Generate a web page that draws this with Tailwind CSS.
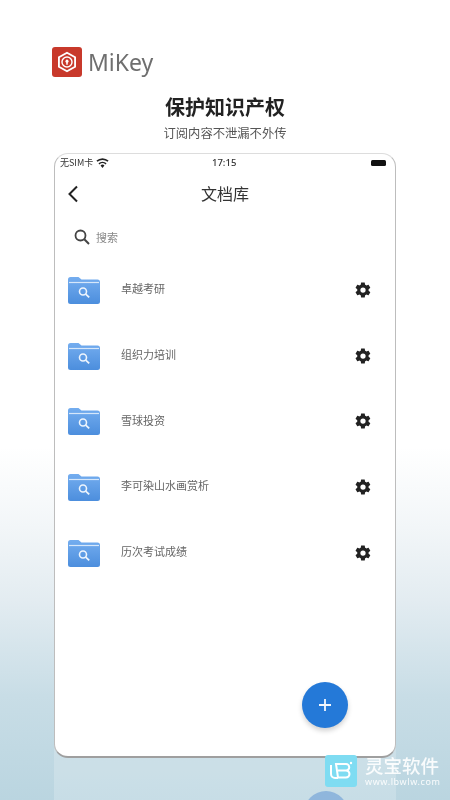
<!DOCTYPE html>
<html lang="en">
<head>
  <meta charset="UTF-8">
  <title>MiKey</title>
  <script src="https://cdn.jsdelivr.net/npm/@tailwindcss/browser@4"></script>
</head>
<body class="m-0">
  <div class="relative w-[450px] h-[800px] overflow-hidden blur-[0.4px] bg-[linear-gradient(180deg,#ffffff_0%,#ffffff_56%,#f2f6f8_66%,#e3ecf1_75%,#c8dde6_87%,#bad5e0_100%)] font-['Noto_Sans_CJK_SC','Noto_Sans',sans-serif]">

    <!-- shared folder gradient -->
    <svg class="absolute w-0 h-0">
      <defs>
        <linearGradient id="folderFill" x1="0" y1="0" x2="0" y2="1">
          <stop offset="0" stop-color="#74adef"/>
          <stop offset="1" stop-color="#4c8edd"/>
        </linearGradient>
      </defs>
    </svg>

    <!-- Logo -->
    <div class="flex items-center pl-[52px] pt-[47px] h-[77px]">
      <div class="w-[30px] h-[30px] rounded-[3px] bg-[#c8392b] flex items-center justify-center">
        <svg width="24" height="24" viewBox="0 0 22 22" fill="none">
          <path d="M11 2.500l7.400 4.200v8.600L11 19.500l-7.400-4.200V6.700z" stroke="#fff" stroke-width="1.700" fill="none"/>
          <circle cx="11" cy="11" r="4.600" stroke="#fff" stroke-width="1.300"/>
          <circle cx="11" cy="10.200" r="1.400" fill="#fff"/>
          <rect x="10.300" y="10.500" width="1.400" height="3" fill="#fff"/>
        </svg>
      </div>
      <span class="ml-[6px] text-[23px] leading-none text-[#6f6f6f] font-['Noto_Sans',sans-serif]">MiKey</span>
    </div>

    <!-- Heading -->
    <div class="flex flex-col items-center">
      <h1 class="text-[20px] leading-[28px] mt-[16px] font-bold text-[#222]">保护知识产权</h1>
      <p class="text-[12.300px] leading-[18px] mt-[3px] text-[#555]">订阅内容不泄漏不外传</p>
    </div>

    <!-- Phone card -->
    <div class="relative z-10 mx-[54px] mt-[11px] w-[342px] h-[605px] bg-white rounded-[14px] border border-[#bdbdbd] border-t-[#dddddd] border-b-[#9f9f9f] border-b-2 flex flex-col">
      <!-- Status bar -->
      <div class="relative flex items-center h-[17px] px-[5px] text-[#333]">
        <span class="text-[9px] leading-none">无SIM卡</span>
        <svg class="ml-[3px]" width="13" height="10" viewBox="0 0 24 18" fill="#222">
          <path d="M12 18l-3.600-4.600a5.800 5.800 0 0 1 7.200 0z"/>
          <path d="M12 6.500a11 11 0 0 0-7.500 3l1.900 2.300a8 8 0 0 1 11.200 0l1.900-2.300a11 11 0 0 0-7.500-3z"/>
          <path d="M12 0A17 17 0 0 0 .8 4.600l1.900 2.300a14 14 0 0 1 18.600 0l1.900-2.300A17 17 0 0 0 12 0z"/>
        </svg>
        <span class="absolute left-[157px] text-[9.500px] font-medium leading-none font-['Noto_Sans',sans-serif]">17:15</span>
        <div class="ml-auto mr-[4px] w-[15px] h-[6px] rounded-[1.500px] bg-[#111]"></div>
      </div>

      <!-- Title bar -->
      <div class="relative flex items-center justify-center h-[46px] pb-[2px]">
        <svg class="absolute left-[11px] top-[14px]" width="14" height="18" viewBox="0 0 14 18" fill="none">
          <path d="M11 1.500L3.500 9l7.500 7.500" stroke="#222" stroke-width="2"/>
        </svg>
        <span class="text-[16px] leading-none text-[#333]">文档库</span>
      </div>

      <!-- Search -->
      <div class="flex items-center h-[32px] mt-[4px] pl-[18px]">
        <svg width="18" height="18" viewBox="0 0 18 18" fill="none">
          <circle cx="7.500" cy="7.500" r="5" stroke="#444" stroke-width="1.800"/>
          <path d="M11.300 11.300L16 16" stroke="#444" stroke-width="2"/>
        </svg>
        <span class="ml-[5px] text-[11px] leading-none text-[#888]">搜索</span>
      </div>

      <!-- Folder list -->
      <div class="flex flex-col mt-[4px]">
        <div class="flex items-center h-[65.750px] pl-[12px] pr-[23px]">
          <svg width="34" height="30" viewBox="0 0 34 30"><path d="M1 4.500A2.500 2.500 0 0 1 3.500 2h8l3 2.500h16A2.500 2.500 0 0 1 33 7v19.500a2.500 2.500 0 0 1-2.500 2.500h-27A2.500 2.500 0 0 1 1 26.500z" fill="url(#folderFill)"/><path d="M2 7.500h30" stroke="#d6e7fa" stroke-width="1.200"/><circle cx="16" cy="16.500" r="3.500" fill="none" stroke="#eef5fd" stroke-width="1.600"/><path d="M18.700 19.200l3.500 3.200" stroke="#eef5fd" stroke-width="1.800"/></svg>
          <span class="ml-[20px] mb-[3px] text-[11px] text-[#666]">卓越考研</span>
          <svg class="ml-auto" width="18" height="18" viewBox="0 0 24 24" fill="#222"><path d="M19.400 13c0-.3.1-.6.1-1s0-.7-.1-1l2.100-1.600c.2-.2.2-.4.1-.6l-2-3.500c-.1-.2-.4-.3-.6-.2l-2.500 1c-.5-.4-1.100-.7-1.700-1L14.400 2.500c0-.3-.2-.5-.5-.5h-4c-.2 0-.4.2-.5.4L9 5.100c-.6.2-1.200.6-1.700 1l-2.500-1c-.2-.1-.5 0-.6.2l-2 3.500c-.1.200 0 .5.100.6L4.400 11c0 .3-.1.700-.1 1s0 .7.1 1l-2.100 1.600c-.2.200-.2.400-.1.600l2 3.500c.1.200.4.300.6.200l2.500-1c.5.400 1.100.700 1.700 1l.4 2.600c0 .2.200.400.500.400h4c.2 0 .5-.2.500-.4l.4-2.600c.6-.3 1.200-.6 1.700-1l2.500 1c.2.100.5 0 .6-.2l2-3.500c.1-.2.100-.5-.1-.6zM12 15.500a3.500 3.500 0 1 1 0-7 3.500 3.500 0 0 1 0 7z"/></svg>
        </div>
        <div class="flex items-center h-[65.750px] pl-[12px] pr-[23px]">
          <svg width="34" height="30" viewBox="0 0 34 30"><path d="M1 4.500A2.500 2.500 0 0 1 3.500 2h8l3 2.500h16A2.500 2.500 0 0 1 33 7v19.500a2.500 2.500 0 0 1-2.500 2.500h-27A2.500 2.500 0 0 1 1 26.500z" fill="url(#folderFill)"/><path d="M2 7.500h30" stroke="#d6e7fa" stroke-width="1.200"/><circle cx="16" cy="16.500" r="3.500" fill="none" stroke="#eef5fd" stroke-width="1.600"/><path d="M18.700 19.200l3.500 3.200" stroke="#eef5fd" stroke-width="1.800"/></svg>
          <span class="ml-[20px] mb-[3px] text-[11px] text-[#666]">组织力培训</span>
          <svg class="ml-auto" width="18" height="18" viewBox="0 0 24 24" fill="#222"><path d="M19.400 13c0-.3.1-.6.1-1s0-.7-.1-1l2.100-1.600c.2-.2.2-.4.1-.6l-2-3.500c-.1-.2-.4-.3-.6-.2l-2.500 1c-.5-.4-1.100-.7-1.700-1L14.400 2.500c0-.3-.2-.5-.5-.5h-4c-.2 0-.4.2-.5.4L9 5.100c-.6.2-1.200.6-1.700 1l-2.500-1c-.2-.1-.5 0-.6.2l-2 3.500c-.1.200 0 .5.100.6L4.400 11c0 .3-.1.700-.1 1s0 .7.1 1l-2.100 1.600c-.2.200-.2.400-.1.600l2 3.500c.1.200.4.300.6.200l2.500-1c.5.400 1.100.700 1.700 1l.4 2.600c0 .2.200.400.500.400h4c.2 0 .5-.2.500-.4l.4-2.600c.6-.3 1.200-.6 1.700-1l2.500 1c.2.100.5 0 .6-.2l2-3.500c.1-.2.100-.5-.1-.6zM12 15.500a3.500 3.500 0 1 1 0-7 3.500 3.500 0 0 1 0 7z"/></svg>
        </div>
        <div class="flex items-center h-[65.750px] pl-[12px] pr-[23px]">
          <svg width="34" height="30" viewBox="0 0 34 30"><path d="M1 4.500A2.500 2.500 0 0 1 3.500 2h8l3 2.500h16A2.500 2.500 0 0 1 33 7v19.500a2.500 2.500 0 0 1-2.500 2.500h-27A2.500 2.500 0 0 1 1 26.500z" fill="url(#folderFill)"/><path d="M2 7.500h30" stroke="#d6e7fa" stroke-width="1.200"/><circle cx="16" cy="16.500" r="3.500" fill="none" stroke="#eef5fd" stroke-width="1.600"/><path d="M18.700 19.200l3.500 3.200" stroke="#eef5fd" stroke-width="1.800"/></svg>
          <span class="ml-[20px] mb-[3px] text-[11px] text-[#666]">雪球投资</span>
          <svg class="ml-auto" width="18" height="18" viewBox="0 0 24 24" fill="#222"><path d="M19.400 13c0-.3.1-.6.1-1s0-.7-.1-1l2.100-1.600c.2-.2.2-.4.1-.6l-2-3.500c-.1-.2-.4-.3-.6-.2l-2.500 1c-.5-.4-1.100-.7-1.700-1L14.400 2.500c0-.3-.2-.5-.5-.5h-4c-.2 0-.4.2-.5.4L9 5.100c-.6.2-1.200.6-1.700 1l-2.500-1c-.2-.1-.5 0-.6.2l-2 3.500c-.1.200 0 .5.100.6L4.400 11c0 .3-.1.700-.1 1s0 .7.1 1l-2.100 1.600c-.2.200-.2.400-.1.600l2 3.500c.1.200.4.300.6.200l2.500-1c.5.400 1.100.700 1.700 1l.4 2.600c0 .2.200.400.500.400h4c.2 0 .5-.2.500-.4l.4-2.600c.6-.3 1.200-.6 1.700-1l2.500 1c.2.100.5 0 .6-.2l2-3.500c.1-.2.100-.5-.1-.6zM12 15.500a3.500 3.500 0 1 1 0-7 3.500 3.500 0 0 1 0 7z"/></svg>
        </div>
        <div class="flex items-center h-[65.750px] pl-[12px] pr-[23px]">
          <svg width="34" height="30" viewBox="0 0 34 30"><path d="M1 4.500A2.500 2.500 0 0 1 3.500 2h8l3 2.500h16A2.500 2.500 0 0 1 33 7v19.500a2.500 2.500 0 0 1-2.500 2.500h-27A2.500 2.500 0 0 1 1 26.500z" fill="url(#folderFill)"/><path d="M2 7.500h30" stroke="#d6e7fa" stroke-width="1.200"/><circle cx="16" cy="16.500" r="3.500" fill="none" stroke="#eef5fd" stroke-width="1.600"/><path d="M18.700 19.200l3.500 3.200" stroke="#eef5fd" stroke-width="1.800"/></svg>
          <span class="ml-[20px] mb-[3px] text-[11px] text-[#666]">李可染山水画赏析</span>
          <svg class="ml-auto" width="18" height="18" viewBox="0 0 24 24" fill="#222"><path d="M19.400 13c0-.3.1-.6.1-1s0-.7-.1-1l2.100-1.600c.2-.2.2-.4.1-.6l-2-3.500c-.1-.2-.4-.3-.6-.2l-2.500 1c-.5-.4-1.100-.7-1.700-1L14.400 2.500c0-.3-.2-.5-.5-.5h-4c-.2 0-.4.2-.5.4L9 5.100c-.6.2-1.200.6-1.700 1l-2.500-1c-.2-.1-.5 0-.6.2l-2 3.500c-.1.200 0 .5.100.6L4.400 11c0 .3-.1.700-.1 1s0 .7.1 1l-2.100 1.600c-.2.200-.2.400-.1.600l2 3.500c.1.200.4.300.6.200l2.500-1c.5.400 1.100.700 1.700 1l.4 2.600c0 .2.200.400.500.400h4c.2 0 .5-.2.500-.4l.4-2.600c.6-.3 1.200-.6 1.700-1l2.500 1c.2.100.5 0 .6-.2l2-3.500c.1-.2.100-.5-.1-.6zM12 15.500a3.500 3.500 0 1 1 0-7 3.500 3.500 0 0 1 0 7z"/></svg>
        </div>
        <div class="flex items-center h-[65.750px] pl-[12px] pr-[23px]">
          <svg width="34" height="30" viewBox="0 0 34 30"><path d="M1 4.500A2.500 2.500 0 0 1 3.500 2h8l3 2.500h16A2.500 2.500 0 0 1 33 7v19.500a2.500 2.500 0 0 1-2.500 2.500h-27A2.500 2.500 0 0 1 1 26.500z" fill="url(#folderFill)"/><path d="M2 7.500h30" stroke="#d6e7fa" stroke-width="1.200"/><circle cx="16" cy="16.500" r="3.500" fill="none" stroke="#eef5fd" stroke-width="1.600"/><path d="M18.700 19.200l3.500 3.200" stroke="#eef5fd" stroke-width="1.800"/></svg>
          <span class="ml-[20px] mb-[3px] text-[11px] text-[#666]">历次考试成绩</span>
          <svg class="ml-auto" width="18" height="18" viewBox="0 0 24 24" fill="#222"><path d="M19.400 13c0-.3.1-.6.1-1s0-.7-.1-1l2.100-1.600c.2-.2.2-.4.1-.6l-2-3.500c-.1-.2-.4-.3-.6-.2l-2.500 1c-.5-.4-1.100-.7-1.700-1L14.400 2.500c0-.3-.2-.5-.5-.5h-4c-.2 0-.4.2-.5.4L9 5.100c-.6.2-1.200.6-1.700 1l-2.500-1c-.2-.1-.5 0-.6.2l-2 3.500c-.1.200 0 .5.100.6L4.400 11c0 .3-.1.700-.1 1s0 .7.1 1l-2.100 1.600c-.2.200-.2.400-.1.600l2 3.500c.1.200.4.300.6.200l2.500-1c.5.400 1.100.700 1.700 1l.4 2.600c0 .2.200.400.500.400h4c.2 0 .5-.2.500-.4l.4-2.600c.6-.3 1.200-.6 1.700-1l2.500 1c.2.100.5 0 .6-.2l2-3.500c.1-.2.100-.5-.1-.6zM12 15.500a3.500 3.500 0 1 1 0-7 3.500 3.500 0 0 1 0 7z"/></svg>
        </div>
      </div>

      <!-- Add button -->
      <div class="absolute left-[247px] top-[528px] w-[46px] h-[46px] rounded-full bg-[#2479d8] shadow-[0_3px_5px_rgba(0,0,0,0.18)] flex items-center justify-center">
        <svg width="16" height="16" viewBox="0 0 16 16"><path d="M8 2v12M2 8h12" stroke="#f2f7fd" stroke-width="1.800"/></svg>
      </div>
    </div>

    <!-- Card reflection under the card -->
    <div class="absolute left-[54px] top-[745px] w-[342px] h-[60px] bg-white/20"></div>
    <div class="absolute left-[304px] top-[791px] w-[44px] h-[44px] rounded-full bg-[#8fb6dc]"></div>

    <!-- Watermark -->
    <div class="absolute z-20 left-[325px] top-[755px] flex items-center">
      <div class="w-[32px] h-[32px] rounded-[3px] bg-[#7fdcf2] flex items-center justify-center">
        <svg width="26" height="22" viewBox="0 0 26 22" fill="none">
          <path d="M3 5v9a4 4 0 0 0 4 4h3" stroke="#fff" stroke-width="2"/>
          <path d="M8 4h10a3 3 0 0 1 0 6.500H10h8a3.500 3.500 0 0 1 0 7h-8z" stroke="#fff" stroke-width="2"/>
          <circle cx="23" cy="3" r="1.200" fill="#fff"/>
        </svg>
      </div>
      <div class="ml-[8px] flex flex-col items-start text-white/90">
        <span class="text-[18.500px] leading-[21px] font-medium">灵宝软件</span>
        <span class="text-[9px] leading-[11px] tracking-[0.6px] font-['Noto_Sans',sans-serif]">www.lbwlw.com</span>
      </div>
    </div>
  </div>
</body>
</html>
